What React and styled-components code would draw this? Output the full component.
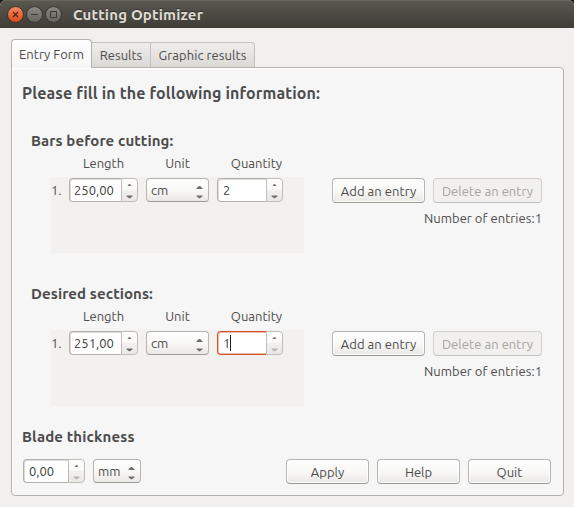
import React from 'react';
import styled, { createGlobalStyle, css } from 'styled-components';

const GlobalStyle = createGlobalStyle`
  * { box-sizing: border-box; }
  body {
    margin: 0;
    background: #1c1b18;
    color: #4c4c4c;
    font: 13px/18px Ubuntu, "Noto Sans", sans-serif;
  }
  button, input { font: inherit; color: inherit; margin: 0; }
`;

const Window = styled.div`
  width: 574px;
  height: 507px;
  display: flex;
  flex-direction: column;
  background: #f1f0ee;
  border-radius: 6px 6px 0 0;
  overflow: hidden;
`;

const TitleBar = styled.header`
  height: 28px;
  flex: none;
  display: flex;
  align-items: center;
  padding: 1px 0 0 7px;
  background: linear-gradient(#5b584f, #3d3c37);
  box-shadow: inset 0 1px #69665d;
`;

const WindowButtons = styled.svg`
  width: 57px;
  height: 19px;
  flex: none;
`;

const Label = styled.span`
  white-space: nowrap;
  letter-spacing: ${(p) => p.$ls || 0}px;
`;

const Title = styled(Label)`
  margin-left: 9px;
  font-size: 15px;
  font-weight: 700;
  color: #dfdbd2;
  text-shadow: 0 -1px #33322e;
`;

const Tabs = styled.nav`
  height: 29px;
  margin: 11px 11px -1px;
  flex: none;
  display: flex;
  align-items: flex-end;
  z-index: 1;
`;

const Tab = styled.button`
  width: ${(p) => p.$w}px;
  height: 26px;
  padding: 0;
  border: 1px solid #c3c0bc;
  border-left-width: ${(p) => (p.$first ? 0 : 1)}px;
  border-bottom-color: #b5b2ad;
  border-radius: ${(p) => (p.$last ? '0 4px 0 0' : '0')};
  margin-bottom: 0;
  background: linear-gradient(#efeeec, #dbd9d6);
  ${(p) => p.$active && css`
    height: 29px;
    border: 1px solid #b5b2ad;
    border-bottom: 0;
    border-radius: 4px 4px 0 0;
    background: linear-gradient(#fdfdfd, #f6f6f6);
    padding-bottom: 1px;
  `}
`;

const Panel = styled.main`
  width: 553px;
  height: 429px;
  margin-left: 11px;
  flex: none;
  display: flex;
  flex-direction: column;
  border: 1px solid #b5b2ad;
  border-radius: 0 4px 4px 4px;
  background: #f6f6f6;
  box-shadow: inset 1px 1px #fff;
`;

const PageHeading = styled.h1`
  height: 24px;
  margin: 13px 0 0 10px;
  font-size: 16px;
  line-height: 24px;
`;

const Group = styled.section`
  height: 153px;
  padding: 26px 0 0 19px;
  flex: none;
`;

const GroupHeading = styled.h2`
  height: 20px;
  margin: 0;
  font-size: 15px;
  line-height: 20px;
`;

const Columns = styled.div`
  height: 26px;
  display: grid;
  grid-template-columns: 69px 63px 66px;
  column-gap: 8px;
  width: 252px;
  padding-left: 38px;
  text-align: center;
  line-height: 24px;
`;

const ColumnLabel = styled(Label)`
  padding-left: ${(p) => p.$shift || 0}px;
`;

const GroupBody = styled.div`
  display: flex;
`;

const EntryList = styled.div`
  width: 253px;
  height: 76px;
  margin: 0 28px 0 20px;
  padding-top: 1px;
  display: flex;
  align-items: flex-start;
  gap: 8px;
  background: #f2f1ef;
`;

const EntryNumber = styled(Label)`
  width: 10px;
  line-height: 25px;
`;

const SpinBox = styled.div`
  width: ${(p) => p.$w}px;
  height: 24px;
  flex: none;
  display: flex;
`;

const SpinField = styled.div`
  flex: 1;
  height: 24px;
  padding-left: ${(p) => (p.$inset || 5)}px;
  display: flex;
  align-items: center;
  color: #3c3c3c;
  background: #fff;
  border: 1px solid ${(p) => (p.$focused ? '#d2532b' : '#b5b2ad')};
  border-right: 0;
  border-radius: 4px 0 0 4px;
  box-shadow: ${(p) => (p.$focused ? 'inset 1px 1px #f0bba8, inset 0 -1px #f0bba8' : 'inset 1px 1px #dfdddb')};
`;

const Caret = styled.i`
  width: 1px;
  height: 16px;
  background: #222;
`;

const SpinButtons = styled.svg`
  width: 17px;
  height: 24px;
  flex: none;
  border: 1px solid #c0bdb9;
  border-radius: 0 4px 4px 0;
  background: linear-gradient(#fefefe, #f8f8f7 48%, #f1f0ee 52%, #e9e8e6);
`;

const raised = css`
  background: linear-gradient(#fefefe, #f8f8f7 50%, #eae8e6);
  border: 1px solid #b8b4af;
  border-bottom-color: #9e9b96;
  border-radius: 4px;
`;

const Select = styled.button`
  ${raised}
  width: ${(p) => p.$w}px;
  height: 24px;
  flex: none;
  padding: 0 5px 0 4px;
  display: flex;
  justify-content: space-between;
  align-items: center;
`;

const SelectArrows = styled.svg`
  width: 7px;
  height: 22px;
`;

const Button = styled.button`
  ${raised}
  width: ${(p) => p.$w}px;
  height: 25px;
  padding: 1px 0 0;
  box-shadow: inset 0 0 0 1px #fffc;
  &:disabled {
    color: #a5a4a2;
    border-color: #d2d0cd;
    border-bottom-color: #c3c1bd;
    background: #f1f0ef;
    box-shadow: none;
  }
`;

const Actions = styled.div`
  padding-top: 1px;
  width: 210px;
`;

const ButtonRow = styled.div`
  display: flex;
  gap: 8px;
`;

const EntryCount = styled.div`
  margin-top: 6px;
  text-align: right;
`;

const BladeHeading = styled(GroupHeading)`
  margin: 16px 0 0 10px;
`;

const Footer = styled.footer`
  margin-top: 12px;
  padding: 0 12px 0 11px;
  display: flex;
  align-items: flex-start;
  justify-content: space-between;
`;

function Spin({ w, value, focused, ls, inset, downOff }) {
  return (
    <SpinBox $w={w}>
      <SpinField $focused={focused} $inset={inset}>
        <Label $ls={ls}>{value}</Label>
        {focused && <Caret />}
      </SpinField>
      <SpinButtons viewBox="0 0 15 22">
        <path d="M5.5 7h4L8 5H7z" fill="#777" />
        <path d="M4.5 16.5h6v.8L8 19.3H7l-2.5-2z" fill={downOff ? '#b5b4b2' : '#6d6d6d'} />
      </SpinButtons>
    </SpinBox>
  );
}

function Combo({ w, value }) {
  return (
    <Select $w={w}>
      <Label>{value}</Label>
      <SelectArrows viewBox="0 0 7 22">
        <path d="M.5 10V9.3L3 7h1l2.5 2.3v.7zM.5 16.5h6v.8L4 19.3H3L.5 17.3z" fill="#6d6d6d" />
      </SelectArrows>
    </Select>
  );
}

function EntryGroup({ title, length, quantity, focused }) {
  return (
    <Group>
      <GroupHeading><Label $ls={0.09}>{title}</Label></GroupHeading>
      <Columns>
        <ColumnLabel>Length</ColumnLabel>
        <ColumnLabel>Unit</ColumnLabel>
        <ColumnLabel $shift={13}>Quantity</ColumnLabel>
      </Columns>
      <GroupBody>
        <EntryList>
          <EntryNumber>1.</EntryNumber>
          <Spin w={69} value={length} inset={4} />
          <Combo w={63} value="cm" />
          <Spin w={66} value={quantity} focused={focused} downOff={focused} />
        </EntryList>
        <Actions>
          <ButtonRow>
            <Button $w={93}><Label $ls={0.05}>Add an entry</Label></Button>
            <Button $w={109} disabled><Label $ls={0.05}>Delete an entry</Label></Button>
          </ButtonRow>
          <EntryCount><Label $ls={0.04}>Number of entries:1</Label></EntryCount>
        </Actions>
      </GroupBody>
    </Group>
  );
}

export default function App() {
  return (
    <>
      <GlobalStyle />
      <Window>
        <TitleBar>
          <WindowButtons viewBox="0 0 57 19">
            <defs>
              <linearGradient id="close" x2="0" y2="1">
                <stop stopColor="#f58a65" />
                <stop offset="1" stopColor="#dd4814" />
              </linearGradient>
              <linearGradient id="plain" x2="0" y2="1">
                <stop stopColor="#8c8982" />
                <stop offset="1" stopColor="#65635c" />
              </linearGradient>
            </defs>
            <g stroke="#34332e">
              <circle cx="8.5" cy="9.5" r="8" fill="url(#close)" />
              <circle cx="27.5" cy="9.5" r="8" fill="url(#plain)" />
              <circle cx="46.5" cy="9.5" r="8" fill="url(#plain)" />
            </g>
            <path d="M6 7l5 5M11 7l-5 5" stroke="#5a2412" strokeWidth="1.3" />
            <path d="M24 9.5h7M43.5 6.5h6v6h-6z" fill="none" stroke="#3a3934" />
          </WindowButtons>
          <Title $ls={0.18}>Cutting Optimizer</Title>
        </TitleBar>
        <Tabs>
          <Tab $w={81} $active><Label>Entry Form</Label></Tab>
          <Tab $w={59} $first><Label>Results</Label></Tab>
          <Tab $w={104} $first $last><Label $ls={0.07}>Graphic results</Label></Tab>
        </Tabs>
        <Panel>
          <PageHeading><Label $ls={0.12}>Please fill in the following information:</Label></PageHeading>
          <EntryGroup title="Bars before cutting:" length="250,00" quantity="2" />
          <EntryGroup title="Desired sections:" length="251,00" quantity="1" focused />
          <BladeHeading><Label $ls={0.13}>Blade thickness</Label></BladeHeading>
          <Footer>
            <ButtonRow>
              <Spin w={62} value="0,00" downOff />
              <Combo w={48} value="mm" />
            </ButtonRow>
            <ButtonRow>
              <Button $w={83}><Label>Apply</Label></Button>
              <Button $w={83}><Label>Help</Label></Button>
              <Button $w={83}><Label>Quit</Label></Button>
            </ButtonRow>
          </Footer>
        </Panel>
      </Window>
    </>
  );
}
